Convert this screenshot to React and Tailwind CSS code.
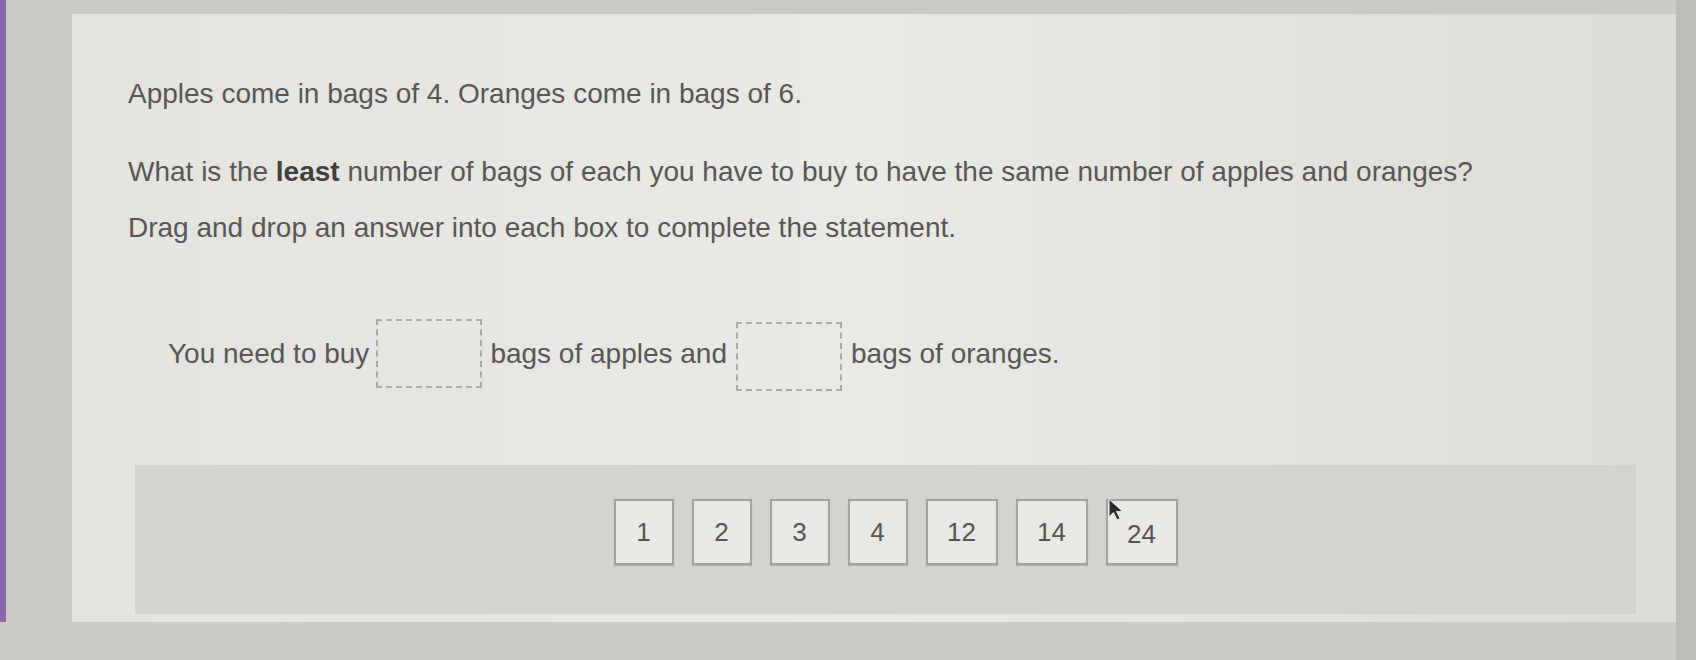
import React from 'react';

const answers = [
  { value: '1', w: 'w-[60px]' },
  { value: '2', w: 'w-[60px]' },
  { value: '3', w: 'w-[60px]' },
  { value: '4', w: 'w-[60px]' },
  { value: '12', w: 'w-[72px]' },
  { value: '14', w: 'w-[72px]' },
  { value: '24', w: 'w-[72px]' }
];

const Cursor = () => (
  <svg
    className="absolute left-[0px] -top-[3px]"
    width="18"
    height="26"
    viewBox="0 0 18 26"
  >
    <path d="M1 1 L1 19 L5.5 14.5 L9 22 L12 20.5 L8.5 13.5 L14.5 13.5 Z" fill="#2b2b2b" stroke="#e8e8e4" strokeWidth="1" />
  </svg>
);

const DropBox = ({ className }) => (
  <div className={`h-[69px] w-[106px] border-2 border-dashed border-[#a9a9a5] ${className}`} />
);

const App = () => {
  return (
    <div className="relative flex h-[660px] w-[1696px] overflow-hidden bg-[#cbcac5] font-['Liberation_Sans',Arial,sans-serif]">
      {/* purple side stripe */}
      <div className="h-[622px] w-[6px] bg-[#8c68a6]" />

      {/* question panel */}
      <div className="ml-[66px] mt-[14px] flex h-[608px] w-[1604px] flex-col bg-linear-to-r from-[#e4e3df] via-[#e9e9e5] to-[#dddcd7] pl-[56px] text-[28px] leading-[32px] text-[#575757]">
        <p className="mt-[64px]">Apples come in bags of 4. Oranges come in bags of 6.</p>
        <p className="mt-[46px]">
          What is the <span className="font-bold text-[#404040]">least</span> number of bags of each you have to buy to have the same number of apples and oranges?
        </p>
        <p className="mt-[24px]">Drag and drop an answer into each box to complete the statement.</p>

        <div className="ml-[40px] mt-[72px] flex items-center">
          <span>You need to buy</span>
          <DropBox className="ml-[7px] mr-[8px]" />
          <span>bags of apples and</span>
          <DropBox className="ml-[9px] mr-[9px] mt-[6px]" />
          <span>bags of oranges.</span>
        </div>

        {/* answer bank */}
        <div className="ml-[7px] mr-[40px] mt-[74px] flex h-[149px] items-center justify-center bg-[#d4d3ce] pb-[15px] pl-[20px]">
          <div className="flex gap-[18px]">
            {answers.map((a) => (
              <div
                key={a.value}
                className={`relative flex h-[66px] ${a.w} items-center justify-center border-2 border-[#a2a29e] bg-[#e8e8e4] text-[26px] text-[#555555] shadow-[0_1px_1px_rgba(0,0,0,0.15)]`}
              >
                {a.value === '24' && <Cursor />}
                <span className={a.value === '24' ? 'mt-[4px]' : ''}>{a.value}</span>
              </div>
            ))}
          </div>
        </div>
      </div>

      {/* right edge shade */}
      <div className="flex-1 bg-[#bdbcb7]" />
    </div>
  );
};

export default App;
